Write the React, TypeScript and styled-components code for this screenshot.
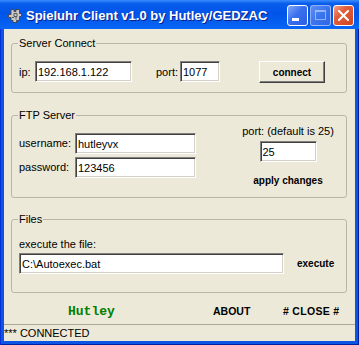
import React from "react";
import styled, { createGlobalStyle } from "styled-components";

/* -----------------------------------------------
 * Spieluhr Client ウィンドウ
 * ----------------------------------------------- */

const GlobalStyle = createGlobalStyle`
  html, body {
    margin: 0;
    padding: 0;
    background: #fff;
  }
  body {
    font-family: "Liberation Sans", Arial, sans-serif;
    font-size: 11px;
    color: #000;
  }
`;

const Window = styled.div`
  width: 359px;
  height: 345px;
  display: flex;
  flex-direction: column;
  background: #0a55e4;
  box-shadow: inset 1px 0 #0831d9, inset -1px 0 #001ea0, inset 0 -1px #001ea0;
`;

const TitleBar = styled.div`
  height: 29px;
  box-sizing: border-box;
  padding: 2px 5px 0 7px;
  display: flex;
  align-items: center;
  background: linear-gradient(
    180deg,
    #3a8cff 0%,
    #0a5eec 12%,
    #0054e8 45%,
    #0561f2 85%,
    #0a66f6 100%
  );
`;

const TitleText = styled.span`
  flex: 1;
  margin-left: 3px;
  font: bold 13px "Liberation Sans", Arial, sans-serif;
  color: #fff;
  text-shadow: 1px 1px #0a1e8c;
  white-space: nowrap;
`;

const CaptionButtons = styled.div`
  display: flex;
  gap: 2px;
`;

const CaptionButton = styled.div<{ $kind: "min" | "max" | "close" }>`
  position: relative;
  width: 21px;
  height: 21px;
  box-sizing: border-box;
  border-radius: 3px;
  border: 1px solid ${(p) => (p.$kind === "max" ? "rgba(255,255,255,0.45)" : "#fff")};
  background: ${(p) =>
    p.$kind === "close"
      ? "linear-gradient(135deg, #f4a48c 0%, #e2603c 35%, #d2441f 100%)"
      : p.$kind === "max"
        ? "linear-gradient(135deg, #5b8ff5 0%, #3a74ee 50%, #2f66e6 100%)"
        : "linear-gradient(135deg, #82a8fa 0%, #3a70ee 45%, #2a5fe4 100%)"};
  display: flex;
  align-items: center;
  justify-content: center;

  ${(p) =>
    p.$kind === "min" &&
    `
    &::after {
      content: "";
      position: absolute;
      left: 4px;
      top: 12px;
      width: 7px;
      height: 3px;
      background: #fff;
    }
  `}

  ${(p) =>
    p.$kind === "max" &&
    `
    &::after {
      content: "";
      position: absolute;
      left: 4px;
      top: 4px;
      width: 9px;
      height: 7px;
      border: 1px solid rgba(255,255,255,0.45);
      border-top-width: 2px;
    }
  `}
`;

const Frame = styled.div`
  flex: 1;
  margin: 0 4px 4px;
  background: #ece9d8;
  display: flex;
  flex-direction: column;
`;

const Content = styled.div`
  padding: 7px 8px 0 7px;
  display: flex;
  flex-direction: column;
`;

const Group = styled.fieldset<{ $top?: number; $pad: string }>`
  margin: ${(p) => p.$top ?? 0}px 0 0;
  padding: ${(p) => p.$pad};
  border: 1px solid #b8b6a6;
  border-radius: 3px;
  min-width: 0;
`;

const Legend = styled.legend`
  padding: 0 1px;
  margin-left: -1px;
  font-size: 11px;
  line-height: 14px;
`;

const Row = styled.div<{ $align?: string; $mt?: number }>`
  display: flex;
  align-items: ${(p) => p.$align ?? "center"};
  margin-top: ${(p) => p.$mt ?? 0}px;
`;

const Label = styled.span<{ $w?: number; $ml?: number }>`
  width: ${(p) => (p.$w ? `${p.$w}px` : "auto")};
  margin-left: ${(p) => p.$ml ?? 0}px;
  align-self: center;
  font-size: 11px;
  line-height: 13px;
  white-space: nowrap;
`;

const TextBox = styled.input<{ $w: number; $mt?: number }>`
  width: ${(p) => p.$w}px;
  height: 21px;
  box-sizing: border-box;
  margin: ${(p) => p.$mt ?? 0}px 0 0;
  padding: 0 1px 0 2px;
  background: #fff;
  border: 1px solid;
  border-color: #808080 #fff #fff #808080;
  box-shadow: inset 1px 1px #404040, inset -1px -1px #d4d0c8;
  font: 11px "Liberation Sans", Arial, sans-serif;
  color: #000;
  outline: none;
`;

const PushButton = styled.button`
  width: 66px;
  height: 22px;
  margin: 0 0 0 39px;
  padding: 0;
  box-sizing: border-box;
  background: #ece9d8;
  border: 1px solid;
  border-color: #fff #404040 #404040 #fff;
  box-shadow: inset -1px -1px #808080;
  font: bold 10px "Liberation Sans", Arial, sans-serif;
  color: #000;
`;

const BoldLink = styled.span<{ $size?: number; $mt?: number; $ml?: number; $ls?: number }>`
  margin: ${(p) => p.$mt ?? 0}px 0 0 ${(p) => p.$ml ?? 0}px;
  font: bold ${(p) => p.$size ?? 10}px "Liberation Sans", Arial, sans-serif;
  letter-spacing: ${(p) => p.$ls ?? 0}px;
  line-height: 12px;
  white-space: nowrap;
`;

const FieldGrid = styled.div`
  display: grid;
  grid-template-columns: 56px 121px;
  row-gap: 3px;
  align-items: center;
`;

const PortColumn = styled.div`
  width: 96px;
  margin: -8px 0 0 44px;
  display: flex;
  flex-direction: column;
  align-items: center;
`;

const Footer = styled.div`
  flex: 1;
  padding-top: 5px;
  display: grid;
  grid-template-columns: 64px 145px 70px auto;
  align-items: center;
`;

const Signature = styled.span`
  grid-column: 2;
  font: bold 13px "Liberation Mono", "Courier New", monospace;
  color: #008000;
`;

const StatusBar = styled.div`
  height: 17px;
  box-sizing: border-box;
  border-top: 1px solid #aca899;
  font-size: 11px;
  line-height: 16px;
`;

const AppIcon = () => (
  <svg width="16" height="16" viewBox="0 0 16 16">
    <path
      d="M4 1.5h3v2h2v-2h3.5v4h2v3h-2v4h-3v2H6v-2H4v-3H1.5v-3H4z"
      fill="#c8c8c8"
      stroke="#4a4a4a"
      strokeWidth="1"
    />
    <path d="M7 5.5h3v3H7zM5 9.5h2M9 8.5v3" fill="none" stroke="#5a5a5a" strokeWidth="1" />
  </svg>
);

const CloseGlyph = () => (
  <svg width="11" height="11" viewBox="0 0 11 11">
    <path d="M1 1l9 9M10 1l-9 9" stroke="#fff" strokeWidth="2" strokeLinecap="square" />
  </svg>
);

const App: React.FC = () => {
  return (
    <>
      <GlobalStyle />
      <Window>
        <TitleBar>
          <AppIcon />
          <TitleText>Spieluhr Client v1.0 by Hutley/GEDZAC</TitleText>
          <CaptionButtons>
            <CaptionButton $kind="min" />
            <CaptionButton $kind="max" />
            <CaptionButton $kind="close">
              <CloseGlyph />
            </CaptionButton>
          </CaptionButtons>
        </TitleBar>

        <Frame>
          <Content>
            {/* Server Connect */}
            <Group $pad="11px 8px 9px 7px">
              <Legend>Server Connect</Legend>
              <Row $align="flex-start">
                <Label $w={16}>ip:</Label>
                <TextBox $w={97} defaultValue="192.168.1.122" />
                <Label $w={24} $ml={24}>
                  port:
                </Label>
                <TextBox $w={40} defaultValue="1077" />
                <PushButton>connect</PushButton>
              </Row>
            </Group>

            {/* FTP Server */}
            <Group $top={15} $pad="11px 8px 10px 7px">
              <Legend>FTP Server</Legend>
              <Row $align="flex-start">
                <FieldGrid>
                  <Label>username:</Label>
                  <TextBox $w={121} defaultValue="hutleyvx" />
                  <Label>password:</Label>
                  <TextBox $w={121} defaultValue="123456" />
                </FieldGrid>
                <PortColumn>
                  <Label>port: (default is 25)</Label>
                  <TextBox $w={57} $mt={3} defaultValue="25" />
                  <BoldLink $mt={13}>apply changes</BoldLink>
                </PortColumn>
              </Row>
            </Group>

            {/* Files */}
            <Group $top={14} $pad="12px 8px 18px 7px">
              <Legend>Files</Legend>
              <Label>execute the file:</Label>
              <Row $mt={2}>
                <TextBox $w={265} defaultValue="C:\Autoexec.bat" />
                <BoldLink $ml={13}>execute</BoldLink>
              </Row>
            </Group>
          </Content>

          <Footer>
            <Signature>Hutley</Signature>
            <BoldLink $size={10.5}>ABOUT</BoldLink>
            <BoldLink $size={10.5} $ls={0.3}>
              # CLOSE #
            </BoldLink>
          </Footer>

          <StatusBar>*** CONNECTED</StatusBar>
        </Frame>
      </Window>
    </>
  );
};

export default App;
